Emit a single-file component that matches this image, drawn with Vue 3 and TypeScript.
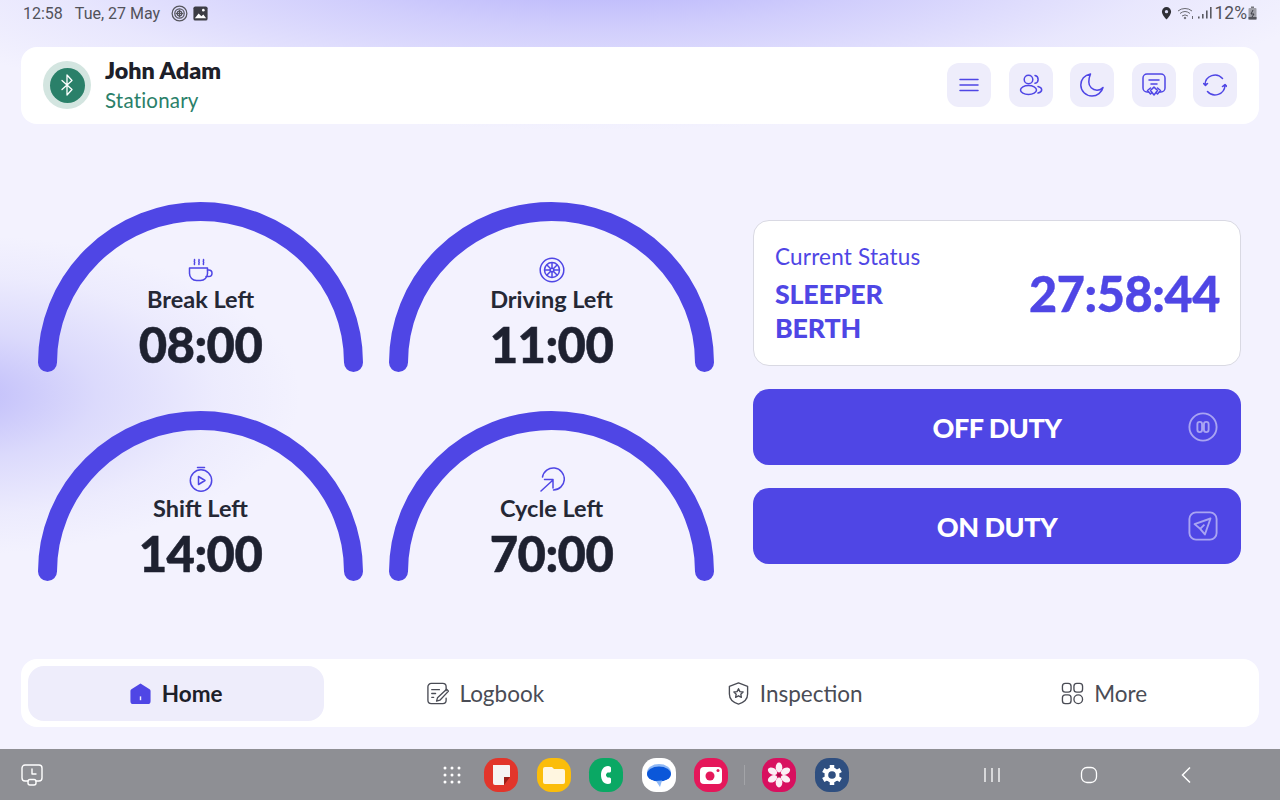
<script setup lang="ts">
const gauges = [
  { id: 'break', label: 'Break Left', time: '08:00' },
  { id: 'drive', label: 'Driving Left', time: '11:00' },
  { id: 'shift', label: 'Shift Left', time: '14:00' },
  { id: 'cycle', label: 'Cycle Left', time: '70:00' },
]
</script>

<template>
  <div class="screen">
    <div class="statusbar">
      <span class="clock">12:58</span>
      <span class="date">Tue, 27 May</span>
      <svg class="sb-icon first" viewBox="0 0 18 18" fill="none" stroke="#55555c" stroke-width="1.300"><circle cx="9" cy="9" r="7.800"/><circle cx="9" cy="9" r="5"/><circle cx="9" cy="9" r="2.500"/><path d="M9 5v8M5 9h8"/></svg>
      <svg class="sb-icon" viewBox="0 0 18 18"><rect x="1.500" y="1.500" width="15" height="15" rx="2" fill="#3c3c44"/><path d="M3 14l4-5 3 3 2-2 3 4z" fill="#fff"/><circle cx="12" cy="5.500" r="1.400" fill="#fff"/></svg>
      <span class="grow"></span>
      <svg class="pin" viewBox="0 0 12 14"><path d="M6 0a5 5 0 0 0-5 5c0 3.500 5 8.500 5 8.500s5-5 5-8.500a5 5 0 0 0-5-5z" fill="#2f2f36"/><circle cx="6" cy="5" r="1.800" fill="#dcdcf6"/></svg>
      <svg class="wifi" viewBox="0 0 18 14" fill="none" stroke="#6a6a72" stroke-width="1"><path d="M1 5a11 11 0 0 1 14 0M3 7.500a8 8 0 0 1 10 0M5 10a5 5 0 0 1 6 0"/><circle cx="8" cy="12" r=".8" fill="#6a6a72"/><path d="M15.500 10v3"/></svg>
      <svg class="signal" viewBox="0 0 14 12"><rect x="0" y="9.500" width="1.600" height="2" fill="#5a5a62"/><rect x="4" y="7" width="1.600" height="4.500" fill="#5a5a62"/><rect x="8" y="3.500" width="1.600" height="8" fill="#5a5a62"/><rect x="12" y="0" width="1.600" height="11.500" fill="#5a5a62"/></svg>
      <span class="pct">12%</span>
      <svg class="batt" viewBox="0 0 9 14"><rect x="3" y="0.500" width="3" height="2" fill="#77777e"/><rect x="0.500" y="2" width="8" height="11.500" rx="1" fill="#a0a0a8"/><rect x="0.500" y="11" width="8" height="2.500" fill="#55555c"/><path d="M5 4L3 8h3l-2 3" stroke="#3c3c44" stroke-width="1" fill="none"/></svg>
    </div>

    <header class="head card">
      <div class="avatar">
        <div class="avatar-in">
          <svg viewBox="0 0 24 24" fill="none" stroke="#fff" stroke-width="1.300" stroke-linejoin="round" stroke-linecap="round"><path d="M7 7.500l10 9-5 5.500V2l5 5.500-10 9"/></svg>
        </div>
      </div>
      <div class="who">
        <div class="name">John Adam</div>
        <div class="state">Stationary</div>
      </div>
      <div class="tools">
        <button class="tool"><svg viewBox="0 0 24 24" fill="none" stroke="#4f46e5" stroke-width="1.500" stroke-linecap="round"><path d="M3 6.500h18M3 12h18M3 17.500h18"/></svg></button>
        <button class="tool"><svg viewBox="0 0 24 24" fill="none" stroke="#4f46e5" stroke-width="1.500" stroke-linecap="round"><circle cx="9.500" cy="6.500" r="4.300"/><ellipse cx="9.500" cy="17" rx="8" ry="4.500"/><path d="M16 2.500a4 4 0 0 1 0 7.800M19 13.500c2.300.6 3.700 2 3.700 3.300s-1.300 2.800-3.700 3.300"/></svg></button>
        <button class="tool"><svg viewBox="0 0 24 24" fill="none" stroke="#4f46e5" stroke-width="1.500" stroke-linejoin="round" stroke-linecap="round"><path d="M10.500 1C4.500 2 .8 6.500.8 12c0 6 5 11 11.200 11 5.200 0 9.800-3.500 11-8.500-1.400 1.700-3.600 2.700-6 2.700-4.600 0-8.200-3.600-8.200-8.200 0-3.200.7-5.700 1.700-8z"/></svg></button>
        <button class="tool"><svg viewBox="0 0 24 24" fill="none" stroke="#4f46e5" stroke-width="1.500" stroke-linejoin="round" stroke-linecap="round"><path d="M6.500 19H5a4 4 0 0 1-4-4V5a4 4 0 0 1 4-4h14a4 4 0 0 1 4 4v10a4 4 0 0 1-4 4h-1.500"/><path d="M7 7h10M9 11h6"/><path d="M12 14l3.500 3.500L12 22l-3.500-4.500zM8.500 15l-3 2.500 3 3.500 1.500-1.500M15.500 15l3 2.500-3 3.500-1.500-1.500"/></svg></button>
        <button class="tool"><svg viewBox="0 0 24 24" fill="none" stroke="#4f46e5" stroke-width="1.500" stroke-linecap="round" stroke-linejoin="round"><path d="M2 11.500A10 10 0 0 1 19.500 5.500M22 12.500A10 10 0 0 1 4.500 18.500"/><path d="M.5 10.500l2 2 2-2" fill="#4f46e5"/><path d="M19.500 13.500l2.500-2 2 2" fill="#4f46e5"/></svg></button>
      </div>
    </header>

    <main class="main">
      <section class="gauges">
        <div v-for="g in gauges" :key="g.id" class="gauge">
          <svg class="arc" viewBox="0 0 325 170" fill="none"><path d="M9.500 160.500a153 151 0 0 1 306 0" stroke="#4f46e5" stroke-width="19" stroke-linecap="round"/></svg>
          <div class="g-text">
            <svg v-if="g.id === 'break'" class="g-icon" viewBox="0 0 26 26" fill="none" stroke="#4f46e5" stroke-width="1.500" stroke-linecap="round" stroke-linejoin="round"><path d="M1.500 11h18v5.500a7 7 0 0 1-7 7h-4a7 7 0 0 1-7-7z"/><path d="M19.500 13h1.200a3.300 3.300 0 0 1 0 6.600H18"/><path d="M6.500 7.500c-.7-.9.7-1.600 0-2.500s.5-1.300 0-2.500M11 7.500c-.7-.9.7-1.600 0-2.500s.5-1.300 0-2.500M15.500 7.500c-.7-.9.7-1.600 0-2.500s.5-1.300 0-2.500"/></svg>
            <svg v-else-if="g.id === 'drive'" class="g-icon" viewBox="0 0 26 26" fill="none" stroke="#4f46e5" stroke-width="1.500"><circle cx="13" cy="13" r="11.800"/><circle cx="13" cy="13" r="7.500"/><circle cx="13" cy="13" r="1.800"/><path d="M13 5.500v5.700M13 14.800v5.700M5.500 13h5.700M14.800 13h5.700M7.700 7.700l4 4M14.300 14.300l4 4M18.300 7.700l-4 4M11.700 14.300l-4 4"/></svg>
            <svg v-else-if="g.id === 'shift'" class="g-icon" viewBox="0 0 26 26" fill="none" stroke="#4f46e5" stroke-width="1.500" stroke-linecap="round" stroke-linejoin="round"><circle cx="13" cy="14.500" r="10.700"/><path d="M9.500 1.500h7"/><path d="M10.500 10.500v8l6.500-4z"/></svg>
            <svg v-else class="g-icon" viewBox="0 0 26 26" fill="none" stroke="#4f46e5" stroke-width="1.500" stroke-linecap="round" stroke-linejoin="round"><path d="M3.500 11A11 11 0 1 1 14.500 24"/><path d="M2 25l12-11M5.500 13.500h8.500V22"/></svg>
            <div class="g-label">{{ g.label }}</div>
            <div class="g-time">{{ g.time }}</div>
          </div>
        </div>
      </section>

      <section class="side">
        <div class="status">
          <div class="status-l">
            <div class="st-cap">Current Status</div>
            <div class="st-val">SLEEPER<br />BERTH</div>
          </div>
          <div class="st-time">27:58:44</div>
        </div>
        <button class="duty">
          <span>OFF DUTY</span>
          <svg class="duty-ic" viewBox="0 0 32 32" fill="none" stroke="#a9a4f2" stroke-width="2"><circle cx="16" cy="16" r="14.500"/><rect x="10" y="10.500" width="5" height="11" rx="2.500"/><rect x="17" y="10.500" width="5" height="11" rx="2.500"/></svg>
        </button>
        <button class="duty">
          <span>ON DUTY</span>
          <svg class="duty-ic" viewBox="0 0 32 32" fill="none" stroke="#a9a4f2" stroke-width="2" stroke-linejoin="round"><rect x="1.500" y="1.500" width="29" height="29" rx="7"/><path d="M24 8L7 14l6 5 5 6zM13 19l4.500-4.500"/></svg>
        </button>
      </section>
    </main>

    <nav class="nav card">
      <div class="nav-item active">
        <svg viewBox="0 0 24 24"><path d="M12 1.500L21.500 7.500a2 2 0 0 1 1 1.800V20a3 3 0 0 1-3 3H4.500a3 3 0 0 1-3-3V9.300a2 2 0 0 1 1-1.800z" fill="#4f46e5"/><path d="M12 15v4" stroke="#eeedfb" stroke-width="1.500"/></svg>
        <span>Home</span>
      </div>
      <div class="nav-item">
        <svg viewBox="0 0 24 24" fill="none" stroke="#4a4c55" stroke-width="1.400" stroke-linecap="round" stroke-linejoin="round"><path d="M21 9V5a3.500 3.500 0 0 0-3.500-3.500h-12A3.500 3.500 0 0 0 2 5v14a3.500 3.500 0 0 0 3.500 3.500h12A3.500 3.500 0 0 0 21 19v-2"/><path d="M6 8h8M6 12h4M6 16h2"/><path d="M21.500 7.500l2 2-9 9.500-3.500 1 1-3.500z"/></svg>
        <span>Logbook</span>
      </div>
      <div class="nav-item">
        <svg viewBox="0 0 24 24" fill="none" stroke="#4a4c55" stroke-width="1.400" stroke-linejoin="round"><path d="M12 1l9.500 3.500v8c0 5.500-4.500 9-9.500 10.500C7 21.500 2.500 18 2.500 12.500v-8z"/><path d="M12 7l1.500 3 3.300.4-2.400 2.300.6 3.300-3-1.600-3 1.600.6-3.300-2.400-2.300 3.300-.4z"/></svg>
        <span>Inspection</span>
      </div>
      <div class="nav-item">
        <svg viewBox="0 0 24 24" fill="none" stroke="#4a4c55" stroke-width="1.400"><rect x="1.500" y="1.500" width="9" height="9" rx="3"/><rect x="13.500" y="1.500" width="9" height="9" rx="3"/><rect x="1.500" y="13.500" width="9" height="9" rx="3"/><circle cx="18" cy="18" r="4.500"/></svg>
        <span>More</span>
      </div>
    </nav>

    <footer class="taskbar">
      <svg class="recent" viewBox="0 0 22 22" fill="none" stroke="#fff" stroke-width="1.400" stroke-linecap="round" stroke-linejoin="round"><path d="M7 17H4a3 3 0 0 1-3-3V4a3 3 0 0 1 3-3h14a3 3 0 0 1 3 3v10a3 3 0 0 1-3 3h-3"/><rect x="7" y="15.500" width="8" height="5.500" rx="2"/><path d="M11 5v5h4"/></svg>
      <svg class="dots" viewBox="0 0 20 20" fill="#fff"><circle cx="3" cy="3" r="1.500"/><circle cx="10" cy="3" r="1.500"/><circle cx="17" cy="3" r="1.500"/><circle cx="3" cy="10" r="1.500"/><circle cx="10" cy="10" r="1.500"/><circle cx="17" cy="10" r="1.500"/><circle cx="3" cy="17" r="1.500"/><circle cx="10" cy="17" r="1.500"/><circle cx="17" cy="17" r="1.500"/></svg>
      <div class="app notes"><svg viewBox="0 0 34 34"><path d="M9 7h16a1 1 0 0 1 1 1v11h-6v8H11a2 2 0 0 1-2-2z" fill="#f6f3f3"/><path d="M20 19h6l-6 8z" fill="#9c1f18"/></svg></div>
      <div class="app files"><svg viewBox="0 0 34 34"><path d="M6 11a2 2 0 0 1 2-2h7l2 2h9a2 2 0 0 1 2 2v11a2 2 0 0 1-2 2H8a2 2 0 0 1-2-2z" fill="#fff6e0"/></svg></div>
      <div class="app phone"><svg viewBox="0 0 34 34"><path d="M19 8c-4.500 0-7 4-7 9s2.500 9 7 9c2 0 3-1 3-2v-3c0-1-1-1.500-2-1.500h-1.500c-1-1-1.500-1.500-1.500-2.500s.5-1.500 1.500-2.500H20c1 0 2-.5 2-1.500v-3c0-1-1-2-3-2z" fill="#fff"/></svg></div>
      <div class="app msg"><svg viewBox="0 0 34 34"><ellipse cx="17" cy="14.500" rx="12" ry="8.500" fill="#8fb8f5"/><ellipse cx="17" cy="16" rx="12" ry="7.500" fill="#0b57d9"/><path d="M14 23l4 6 2-6.500z" fill="#8fb8f5"/></svg></div>
      <div class="app cam"><svg viewBox="0 0 34 34"><rect x="6" y="9" width="22" height="17" rx="4" fill="#fff"/><circle cx="16" cy="18" r="4.500" fill="#e5175a"/><circle cx="24" cy="12.500" r="1.500" fill="#e5175a"/></svg></div>
      <span class="divider"></span>
      <div class="app blossom"><svg viewBox="0 0 34 34" fill="#fbeef4"><ellipse cx="17" cy="9.500" rx="3.300" ry="5"/><ellipse cx="17" cy="24.500" rx="3.300" ry="5"/><ellipse cx="10.500" cy="13.200" rx="3.300" ry="5" transform="rotate(-60 10.500 13.200)"/><ellipse cx="23.500" cy="13.200" rx="3.300" ry="5" transform="rotate(60 23.500 13.200)"/><ellipse cx="10.500" cy="20.800" rx="3.300" ry="5" transform="rotate(60 10.500 20.800)"/><ellipse cx="23.500" cy="20.800" rx="3.300" ry="5" transform="rotate(-60 23.500 20.800)"/><circle cx="17" cy="17" r="1.800" fill="#a60b48"/></svg></div>
      <div class="app gear"><svg viewBox="0 0 34 34"><path d="M17 17V7M17 17v10M17 17L8.300 12M17 17l8.700 5M17 17L8.300 22M17 17l8.700-5" stroke="#fff" stroke-width="4.500"/><circle cx="17" cy="17" r="7.500" fill="#fff"/><circle cx="17" cy="17" r="3.800" fill="#2f4f80"/></svg></div>
      <svg class="sys recents" viewBox="0 0 18 16" stroke="#fff" stroke-width="1.300"><path d="M2 1v14M9 1v14M16 1v14"/></svg>
      <svg class="sys homeb" viewBox="0 0 18 18" fill="none" stroke="#fff" stroke-width="1.300"><rect x="1.500" y="1.500" width="15" height="15" rx="5.500"/></svg>
      <svg class="sys back" viewBox="0 0 12 18" fill="none" stroke="#fff" stroke-width="1.500"><path d="M10 1.500L2.500 9l7.500 7.500"/></svg>
    </footer>
  </div>
</template>

<style>
html, body { margin: 0; padding: 0; }
</style>

<style scoped>
.screen {
  width: 1280px;
  height: 800px;
  overflow: hidden;
  display: flex;
  flex-direction: column;
  font-family: Lato, "Liberation Sans", sans-serif;
  background:
    radial-gradient(ellipse 760px 170px at 600px -40px, #aeaafb 0%, rgba(185,181,251,.6) 40%, rgba(185,181,251,.18) 75%, rgba(185,181,251,0) 100%),
    radial-gradient(ellipse 340px 160px at -40px 395px, #bfbcfa 0%, rgba(196,194,250,.5) 40%, rgba(196,194,250,.14) 75%, rgba(196,194,250,0) 100%),
    #f3f2fe;
}
.card { background: #fff; border-radius: 16px; }
button { border: 0; font-family: inherit; padding: 0; cursor: pointer; }

.statusbar {
  height: 47px;
  flex: none;
  box-sizing: border-box;
  padding: 0 23px 21px 23px;
  display: flex;
  align-items: center;
  font-family: Roboto, "Liberation Sans", sans-serif;
  font-size: 16px;
  color: #52525a;
}
.date { margin-left: 12px; }
.sb-icon { width: 17px; height: 17px; margin-left: 4px; }
.sb-icon.first { margin-left: 11px; }
.grow { flex: 1; }
.pin { width: 11px; height: 13px; }
.wifi { width: 18px; height: 14px; margin-left: 5px; }
.signal { width: 14px; height: 12px; margin-left: 3px; }
.pct { font-size: 17.500px; margin-left: 3px; }
.batt { width: 9px; height: 14px; margin-left: 1px; }

.head {
  flex: none;
  height: 77px;
  margin: 0 21px;
  padding: 0 22px 1px;
  display: flex;
  align-items: center;
  box-sizing: border-box;
}
.avatar {
  width: 48px; height: 48px;
  border-radius: 50%;
  background: #d3e5e0;
  display: flex; align-items: center; justify-content: center;
}
.avatar-in {
  width: 35px; height: 35px;
  border-radius: 50%;
  background: #2a8069;
  display: flex; align-items: center; justify-content: center;
}
.avatar-in svg { width: 24px; height: 24px; }
.who { margin-left: 14px; }
.name { font-size: 23.300px; font-weight: 800; color: #1d2029; line-height: 28px; margin-top: -1px; }
.state { font-size: 20.500px; color: #2a8069; line-height: 26px; margin-top: 3px; letter-spacing: .2px; }
.tools { margin-left: auto; display: flex; gap: 17.500px; }
.tool {
  width: 44px; height: 44px;
  border-radius: 12px;
  background: #eeedfb;
  display: flex; align-items: center; justify-content: center;
}
.tool svg { width: 24px; height: 24px; }

.main {
  flex: 1;
  display: flex;
  align-items: center;
  padding-left: 38px;
}
.gauges {
  display: grid;
  grid-template-columns: 325px 325px;
  column-gap: 26px;
  row-gap: 39px;
}
.gauge { display: grid; height: 170px; }
.arc, .g-text { grid-area: 1 / 1; }
.arc { width: 325px; height: 170px; }
.g-text {
  display: flex;
  flex-direction: column;
  align-items: center;
  padding-top: 55px;
}
.g-icon { width: 26px; height: 26px; }
.g-label {
  font-size: 23.500px;
  font-weight: 700;
  color: #252835;
  line-height: 28px;
  margin-top: 2px;
}
.g-time {
  font-size: 49px;
  font-weight: 900;
  color: #1e2130;
  line-height: 56px;
  margin-top: 3px;
  letter-spacing: -.6px;
  -webkit-text-stroke: .5px #1e2130;
}

.side {
  margin-left: 39px;
  margin-top: 1px;
  width: 488px;
  display: flex;
  flex-direction: column;
  gap: 23px;
}
.status {
  height: 146px;
  box-sizing: border-box;
  background: #fff;
  border: 1px solid #d9d9e3;
  border-radius: 16px;
  padding: 0 20px 0 21px;
  display: flex;
  align-items: center;
  justify-content: space-between;
  color: #4f46e5;
}
.status-l { margin-top: 2px; }
.st-cap { font-size: 22.500px; line-height: 28px; letter-spacing: .2px; }
.st-val { font-size: 26.800px; font-weight: 900; line-height: 34px; margin-top: 6px; letter-spacing: -.2px; }
.st-time { font-size: 48.500px; font-weight: 900; letter-spacing: -.4px; line-height: 60px; margin-top: -1px; -webkit-text-stroke: .4px #4f46e5; }
.duty {
  height: 76px;
  border-radius: 16px;
  background: #4f46e5;
  color: #fff;
  font-size: 27px;
  font-weight: 900;
  letter-spacing: -.5px;
  display: grid;
  grid-template-columns: 1fr;
  align-items: center;
  justify-items: center;
}
.duty span { grid-area: 1 / 1; }
.duty-ic { grid-area: 1 / 1; justify-self: end; width: 30px; height: 30px; margin-right: 23px; }

.nav {
  flex: none;
  height: 68px;
  margin: 0 21px 22px;
  padding: 7px;
  box-sizing: border-box;
  display: grid;
  grid-template-columns: repeat(4, 1fr);
  column-gap: 14px;
}
.nav-item {
  display: flex;
  align-items: center;
  justify-content: center;
  gap: 10px;
  font-size: 22.500px;
  color: #4a4c55;
  height: 55px;
  border-radius: 16px;
}
.nav-item svg { width: 23px; height: 23px; }
.nav-item.active { background: #eeedfb; color: #1d2029; font-weight: 700; }

.taskbar {
  flex: none;
  height: 51px;
  background: #8e8f94;
  display: flex;
  align-items: center;
  padding-left: 21px;
}
.recent { width: 22px; height: 22px; }
.dots { width: 20px; height: 20px; margin-left: 399px; margin-right: 22px; }
.app {
  width: 34px; height: 34px;
  border-radius: 42%;
  margin-right: 18.600px;
  flex: none;
}
.app svg { display: block; width: 34px; height: 34px; }
.notes { background: #e2352b; }
.files { background: #fbbd0a; }
.phone { background: #0aa864; }
.msg { background: #fff; }
.cam { background: #e5175a; margin-right: 16px; }
.divider { width: 1px; height: 20px; background: #a3a4a8; margin-right: 17px; }
.blossom { background: #d8105f; }
.gear { background: #2f4f80; margin-right: 0; }
.sys { flex: none; }
.recents { width: 18px; height: 16px; margin-left: 134px; }
.homeb { width: 18px; height: 18px; margin-left: 79px; }
.back { width: 12px; height: 18px; margin-left: 82px; }
</style>
